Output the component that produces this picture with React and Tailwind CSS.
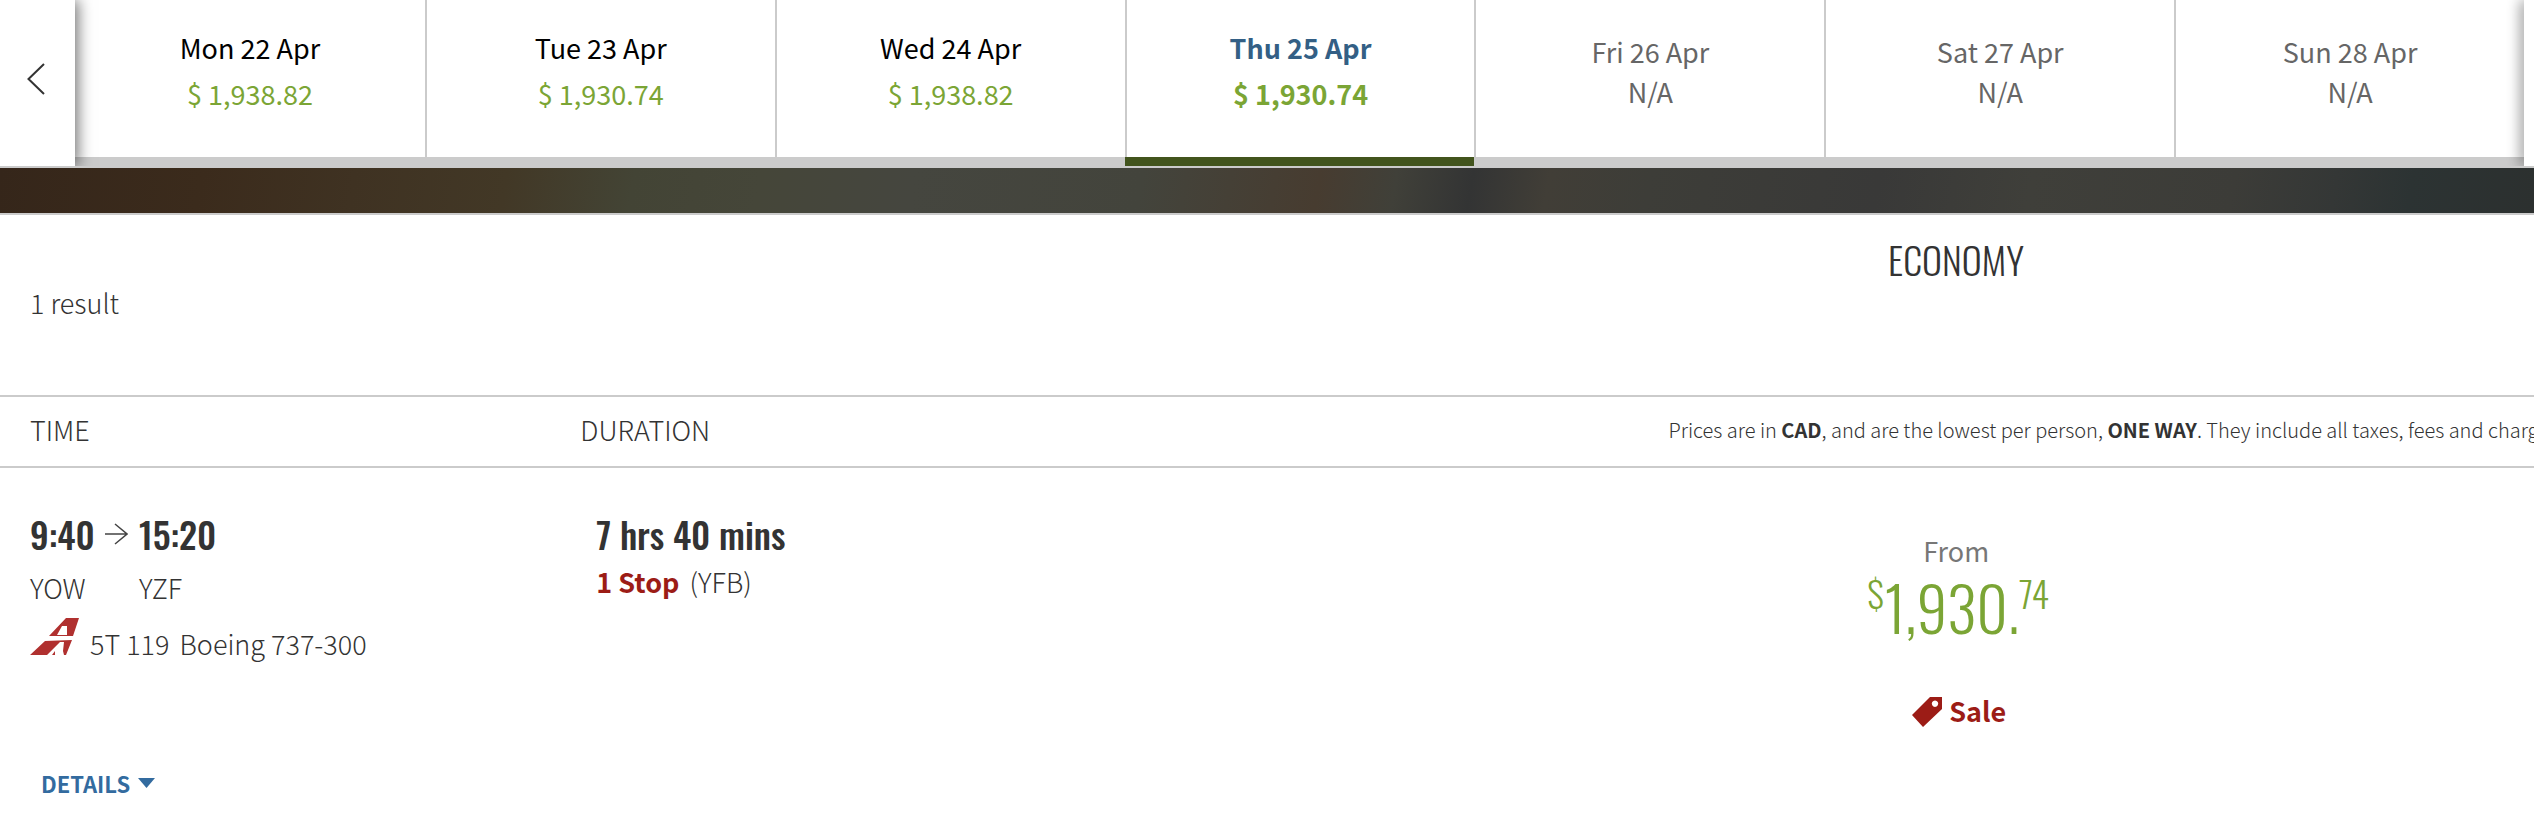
import React from 'react';

const days = [
    { date: 'Mon 22 Apr', price: '$ 1,938.82' },
    { date: 'Tue 23 Apr', price: '$ 1,930.74' },
    { date: 'Wed 24 Apr', price: '$ 1,938.82' },
    { date: 'Thu 25 Apr', price: '$ 1,930.74', selected: true },
    { date: 'Fri 26 Apr' },
    { date: 'Sat 27 Apr' },
    { date: 'Sun 28 Apr' },
];

const DayTab = ({ date, price, selected }) => {
    if (!price) {
        return (
            <button disabled className="h-[166px] border-b-9 border-[#cbcbcb] text-[27px] font-normal leading-10 text-[#666]">
                <span className="flex h-full flex-col items-center border-l-2 border-[#cbcbcb] pt-8">
                    <span>{date}</span>
                    <span>N/A</span>
                </span>
            </button>
        );
    }
    return (
        <button
            aria-pressed={!!selected}
            className={
                selected
                    ? 'group h-[166px] border-b-9 border-[#42541d] text-[27px] font-bold leading-10 text-[#335f85]'
                    : 'group h-[166px] border-b-9 border-[#cbcbcb] text-[27px] font-normal leading-10 text-black'
            }
        >
            <span className="flex h-full flex-col items-center gap-1.5 border-l-2 border-[#cbcbcb] pt-7 group-first:border-l-0">
                <span>{date}</span>
                <span className="text-[#7ba535]">{price}</span>
            </span>
        </button>
    );
};

const DateBar = () => (
    <nav aria-label="Departure date" className="flex overflow-hidden border-b-2 border-[#cbcbcb]">
        <button aria-label="Previous days" className="z-10 flex w-[75px] shrink-0 items-center bg-white pb-2 pl-[27px] shadow-[3px_0_14px_0_rgba(0,0,0,0.55)]">
            <svg width="18" height="32" viewBox="0 0 18 32" fill="none" stroke="#333" strokeWidth="2">
                <path d="M17 1 1.500 16 17 31" />
            </svg>
        </button>
        <div className="grid flex-1 grid-cols-7">
            {days.map((day) => (
                <DayTab key={day.date} {...day} />
            ))}
        </div>
        <button aria-label="Next days" className="z-10 w-2.5 shrink-0 bg-white shadow-[-3px_0_14px_0_rgba(0,0,0,0.45)]" />
    </nav>
);

const AirlineLogo = () => (
    <svg width="50" height="38" viewBox="0 0 50 38" aria-label="Airline">
        <path fill="#b0302f" fillRule="evenodd" d="M36 0H49L43 18H19ZM32 8 27 17H37V8Z" />
        <path fill="#b0302f" d="M15 23 42 22 36 37H34L33 33 34 24H30L17 37H0Z" />
        <path fill="#b0302f" d="M25 33V37H22Z" />
    </svg>
);

const App = () => {
    return (
        <div className="w-full overflow-hidden bg-white font-['Source_Sans_Pro','Noto_Sans_CJK_SC',sans-serif] text-[27px] font-light leading-10 text-[#333]">
            <DateBar />
            <div className="h-[45px] bg-[linear-gradient(100deg,#35261a_0%,#3b2b1c_8%,#3f3222_14%,#423826_20%,#434435_25%,#454639_30%,#45463f_36%,#43443c_45%,#473c30_52%,#404039_55%,#333434_58%,#413e37_61%,#3d3d38_65%,#393938_74%,#3f3f3a_80%,#3c3c38_88%,#343736_92%,#2c3333_95%,#2c302f_100%)]" />

            <header className="grid h-[184px] grid-cols-[580fr_798fr_1156fr] border-y-2 border-[#cbcbcb]">
                <p className="col-span-2 pl-[30px] pt-[68px]">1 result</p>
                <h2 className="pt-6 text-center font-['Oswald','Roboto_Condensed','Liberation_Sans_Narrow',sans-serif] text-[38px] leading-[40px]">ECONOMY</h2>
            </header>

            <table className="w-full table-fixed">
                <colgroup>
                    <col className="w-[22.9%]" />
                    <col className="w-[31.5%]" />
                    <col />
                </colgroup>
                <thead>
                    <tr className="h-[70px] border-b-2 border-[#cbcbcb] text-left">
                        <th scope="col" className="pb-1 pl-[30px] font-light">TIME</th>
                        <th scope="col" className="pb-1 font-light">DURATION</th>
                        <th scope="col" className="overflow-hidden whitespace-nowrap pb-1 pl-[290px] text-[20px] font-light">
                            Prices are in <b className="font-bold">CAD</b>, and are the lowest per person, <b className="font-bold">ONE WAY</b>. They include all taxes, fees and charges.
                        </th>
                    </tr>
                </thead>
                <tbody>
                    <tr className="align-top">
                        <td className="pl-[30px] pt-[46px]">
                            <div className="grid grid-cols-[75px_34px_1fr] items-center font-['Oswald','Roboto_Condensed','Liberation_Sans_Narrow',sans-serif] text-[36px] font-medium leading-10">
                                <span>9:40</span>
                                <svg width="23" height="22" viewBox="0 0 23 22" fill="none" stroke="#444" strokeWidth="1.500">
                                    <path d="M0 11H22M10 1 22 11 10 21" />
                                </svg>
                                <span>15:20</span>
                            </div>
                            <div className="mt-3.5 grid grid-cols-[109px_1fr]">
                                <span>YOW</span>
                                <span>YZF</span>
                            </div>
                            <div className="mt-2.5 flex items-start gap-2.5">
                                <AirlineLogo />
                                <span className="pt-1.5">5T 119</span>
                                <span className="pt-1.5">Boeing 737-300</span>
                            </div>
                        </td>
                        <td className="pl-4 pt-[46px]">
                            <p className="font-['Oswald','Roboto_Condensed','Liberation_Sans_Narrow',sans-serif] text-[36px] font-medium leading-10">7 hrs 40 mins</p>
                            <p className="mt-2 flex gap-2.5">
                                <b className="font-bold text-[#9c1c16]">1 Stop</b>
                                <span>(YFB)</span>
                            </p>
                        </td>
                        <td className="pt-[63px] text-center">
                            <p className="font-normal text-[#777]">From</p>
                            <p className="flex items-start justify-center pl-1 font-['Oswald','Roboto_Condensed','Liberation_Sans_Narrow',sans-serif] text-[61px] leading-[72px] text-[#7ba535]">
                                <span className="text-[36px] leading-[44px]">$</span>
                                <span>1,930.</span>
                                <span className="text-[36px] leading-[44px]">74</span>
                            </p>
                            <p className="mt-12 flex items-center justify-center gap-1.5 pl-1.5 font-bold text-[#9c1c16]">
                                <svg width="31" height="31" viewBox="0 0 31 31">
                                    <path fill="#9c1c16" fillRule="evenodd" d="M18 1H30V13L11 31 0 19ZM23 4.500a3.200 3.200 0 1 0 .01 0Z" />
                                </svg>
                                Sale
                            </p>
                        </td>
                    </tr>
                </tbody>
            </table>

            <button className="ml-[41px] mt-8 flex items-center gap-2 text-[22px] font-bold leading-10 text-[#336b9f]">
                DETAILS
                <svg width="17" height="10" viewBox="0 0 17 10">
                    <path fill="#336b9f" d="M0 0H17L8.500 10Z" />
                </svg>
            </button>
        </div>
    );
};

export default App;
